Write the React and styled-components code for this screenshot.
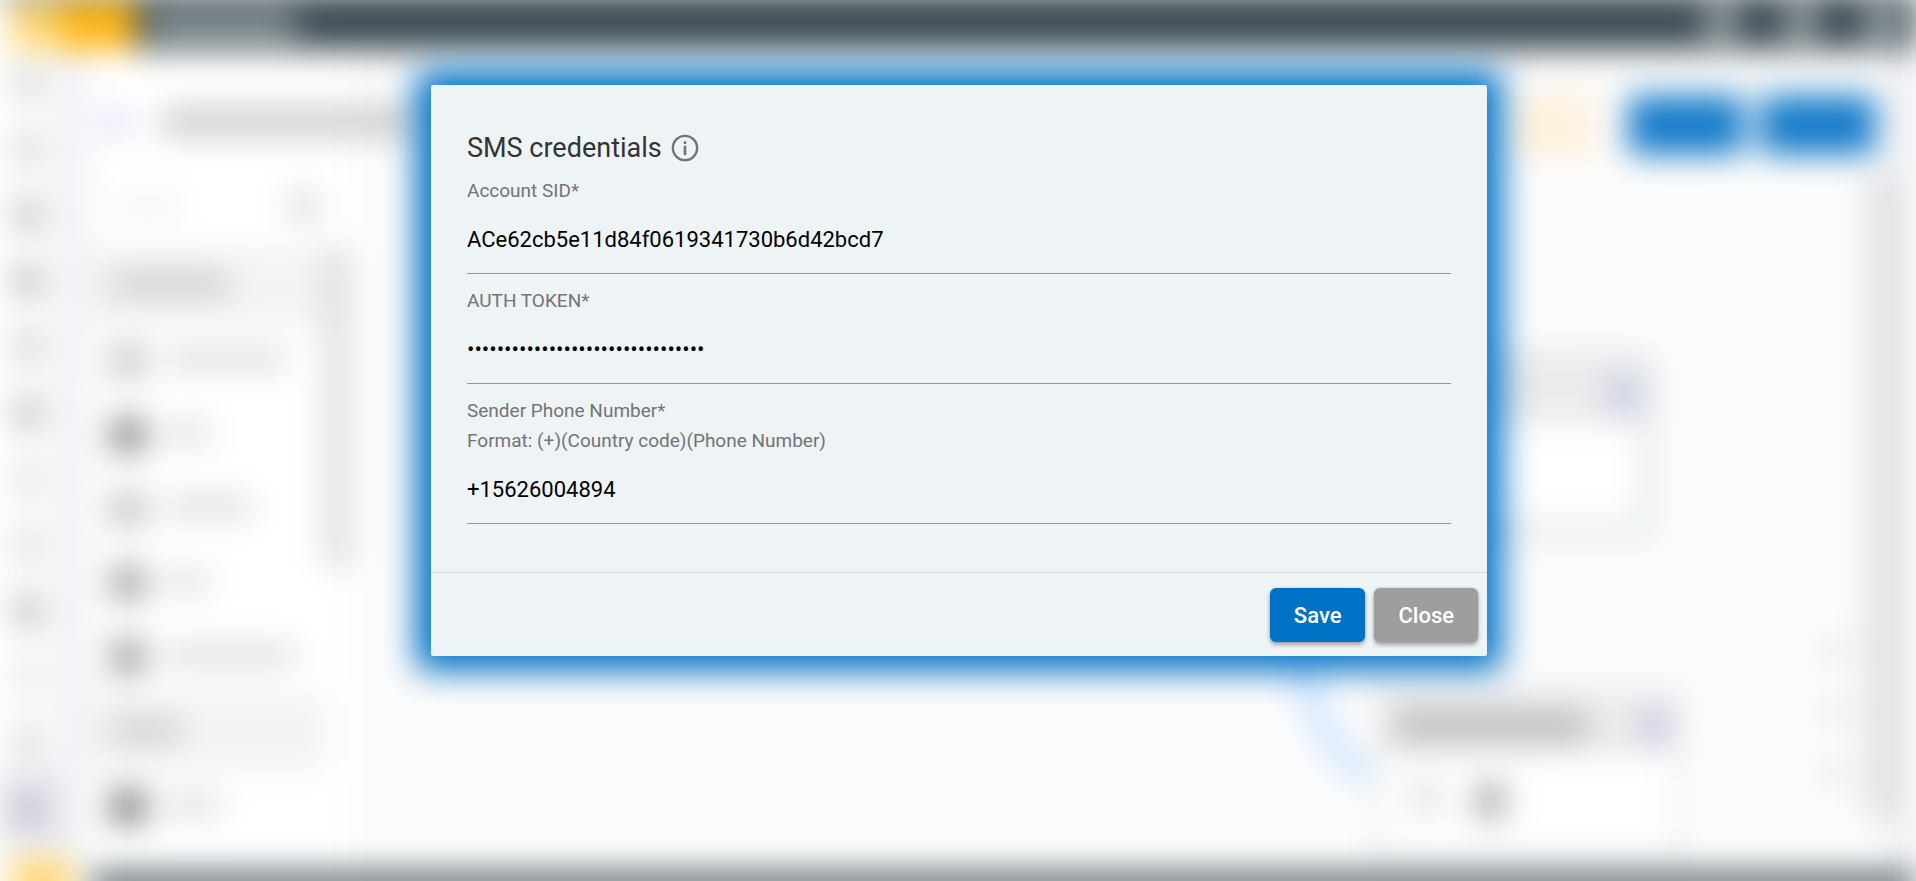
import React, { useState } from 'react'
import styled, { createGlobalStyle } from 'styled-components'


const GlobalStyle = createGlobalStyle`
  * {
    box-sizing: border-box;
  }
  body {
    margin: 0;
    background-color: #fff;
    font-family: Roboto, "Liberation Sans", sans-serif;
  }
`;

const Page = styled.div`
  position: relative;
  height: 100vh;
  overflow: hidden;
`;

/* the builder screen, out of focus while the dialog is open */
const Builder = styled.div`
  height: 100%;
  display: grid;
  grid-template-rows: 50px 1fr 8px;
  filter: blur(16px);
  box-shadow: 0 -8px 0 #3c4b53, 0 14px 0 #3c4b53;
  background-color: #fcfcfc;
`;

const TopBar = styled.header`
  display: flex;
  align-items: flex-start;
  background-color: #3c4b53;
  padding-right: 18px;
  .menu {
    width: 60px;
    height: 50px;
    border-left: 10px solid #fff;
    background-color: #ffd97a;
  }
  .logo {
    width: 76px;
    height: 50px;
    background-color: #ffb813;
  }
  .name {
    width: 146px;
    height: 30px;
    margin: 10px 0 0 14px;
    background-color: #8b959a;
  }
  .actions {
    display: flex;
    gap: 46px;
    margin: 2px 0 0 auto;
  }
`;

const Action = styled.span`
  width: 34px;
  height: 40px;
  border-radius: 50%;
  background-color: #a6afb3;
`;

const Middle = styled.div`
  display: grid;
  grid-template-columns: 56px 32px 260px 1fr;
  min-height: 0;
`;

const SideBar = styled.nav`
  display: flex;
  flex-direction: column;
  align-items: center;
  background-color: #f9fbfb;
`;

const SideItem = styled.span`
  flex: 0 0 66px;
  width: 100%;
  display: flex;
  align-items: center;
  justify-content: center;
  background-color: ${(props) => (props.$active ? '#dcdbe4' : 'transparent')};
  &::after {
    content: '';
    width: 28px;
    height: 28px;
    border-radius: 50%;
    background-color: ${(props) => props.$color};
  }
`;

const Gutter = styled.div`
  background-color: #f0f2f6;
`;

const Palette = styled.aside`
  position: relative;
  z-index: 1;
  display: grid;
  grid-template-columns: 1fr 22px;
  grid-template-rows: 124px 74px 1fr;
  min-height: 0;
  background-color: #fff;
`;

const Heading = styled.div`
  grid-column: 1 / 3;
  display: flex;
  align-items: center;
  gap: 34px;
  padding: 20px 0 0 16px;
  .back {
    flex: 0 0 24px;
    height: 24px;
    background-color: #d9d6f8;
  }
  .name {
    flex: 0 0 260px;
    height: 28px;
    background-color: #cacaca;
  }
`;

const Search = styled.div`
  grid-column: 1 / 3;
  display: flex;
  align-items: center;
  justify-content: space-between;
  padding: 0 32px 10px 30px;
  .hint {
    width: 60px;
    height: 14px;
    background-color: #ebebeb;
  }
  .glass {
    width: 26px;
    height: 26px;
    background-color: #d2d2d2;
  }
`;

const Blocks = styled.div`
  min-height: 0;
  overflow: hidden;
`;

const Section = styled.div`
  height: 76px;
  display: flex;
  align-items: center;
  padding: 0 0 4px 24px;
  background-color: #f3f3f3;
  &::after {
    content: '';
    width: ${(props) => props.$width}px;
    height: 24px;
    background-color: #cccccc;
  }
`;

const Block = styled.div`
  height: 74px;
  display: flex;
  align-items: center;
  gap: 20px;
  padding-left: 22px;
  &::before {
    content: '';
    width: 36px;
    height: 36px;
    border-radius: 8px;
    background-color: ${(props) => props.$color};
  }
  &::after {
    content: '';
    width: ${(props) => props.$width}px;
    height: 20px;
    margin-bottom: 4px;
    background-color: #dadada;
  }
`;

const PaletteScroll = styled.div`
  height: 320px;
  background-color: #dcd8d9;
`;

const Canvas = styled.main`
  position: relative;
  display: grid;
  grid-template-rows: 124px 1fr 54px;
  grid-template-columns: 1fr 24px 24px;
  background-color: #fcfcfc;
  .thumb {
    grid-row: 2;
    grid-column: 2;
    background-color: #dcdcdc;
  }
  .edge {
    grid-row: 1 / 4;
    grid-column: 3;
    background-color: #ecedf2;
  }
`;

const Toolbar = styled.div`
  grid-column: 1 / 3;
  display: flex;
  justify-content: flex-end;
  align-items: center;
  gap: 16px;
  padding: 26px 16px 0 0;
  .test {
    width: 84px;
    height: 60px;
    margin-right: 18px;
    background-color: #fef0db;
  }
  .tool {
    width: 116px;
    height: 60px;
    border-radius: 6px;
    background-color: #187dca;
  }
`;

const Node = styled.div`
  position: absolute;
  right: ${(props) => props.$right}px;
  top: ${(props) => props.$top}px;
  width: ${(props) => props.$width}px;
  height: ${(props) => props.$height}px;
  border: 16px solid ${(props) => props.$border};
  background-color: #fff;
  .head {
    display: flex;
    align-items: center;
    gap: 54px;
    justify-content: flex-end;
    height: 56px;
    padding: 0 4px;
    background-color: #ebebeb;
  }
  .name {
    width: 196px;
    height: 34px;
    background-color: #c0c0c0;
  }
  .edit {
    width: 26px;
    height: 32px;
    background-color: #bfbfe4;
  }
  .foot {
    display: flex;
    gap: 38px;
    padding: 30px 26px;
  }
  .pen {
    width: 24px;
    height: 28px;
    background-color: #d6d6d6;
  }
  .bin {
    width: 28px;
    height: 34px;
    background-color: #a0a0a0;
  }
`;

const Link = styled.svg`
  position: absolute;
  right: 536px;
  top: 590px;
  width: 100px;
  height: 150px;
`;

const Zoomer = styled.div`
  position: absolute;
  right: 70px;
  top: 588px;
  display: flex;
  flex-direction: column;
  gap: 38px;
  span {
    width: 24px;
    height: 24px;
    background-color: #e6e6e6;
  }
`;

const BottomBar = styled.footer`
  display: flex;
  background-color: #3c4b53;
  &::before {
    content: '';
    width: 60px;
    height: 44px;
    margin-top: -14px;
    border: solid #f9fbfb;
    border-width: 0 20px 0 12px;
    background-color: #ffd66e;
  }
`;

const Overlay = styled.div`
  position: absolute;
  inset: 0;
  display: flex;
  justify-content: center;
  align-items: flex-start;
  padding: 85px 16px 0 18px;
`;

const Dialog = styled.form`
  width: 100%;
  max-width: 1056px;
  border-radius: 2px;
  background-color: #eef3f6;
  box-shadow: 0 0 34px 15px #0072c6;
`;

const Content = styled.div`
  padding: 35px 36px 48px;
`;

const Title = styled.h2`
  display: flex;
  align-items: center;
  gap: 7px;
  height: 56px;
  margin: 0;
  color: #333;
  font-size: 27px;
  font-weight: 400;
  line-height: 32px;
  svg {
    width: 32px;
    height: 32px;
    fill: #737373;
  }
`;

const Field = styled.div`
  & + & {
    margin-top: 12px;
  }
  label {
    display: block;
    color: #727476;
    font-size: 19px;
    line-height: 30px;
  }
  input {
    display: block;
    width: 100%;
    height: 68px;
    padding: 0;
    border: none;
    border-bottom: 1px solid #95999b;
    background: transparent;
    color: #000;
    font-family: inherit;
    font-size: 22px;
    &:focus {
      outline: none;
    }
  }
`;

const Actions = styled.div`
  display: flex;
  justify-content: flex-end;
  gap: 9px;
  padding: 15px 9px 14px;
  border-top: 1px solid #d5dadd;
`;

const Button = styled.button`
  height: 54px;
  padding: 0 24px;
  border: none;
  border-radius: 6px;
  background-color: ${(props) => (props.$primary ? '#0072c6' : '#9e9e9e')};
  box-shadow: 0 3px 4px rgba(0, 0, 0, 0.3), 0 0 3px rgba(0, 0, 0, 0.15);
  color: #fff;
  font-family: inherit;
  font-size: 22px;
  font-weight: 500;
  cursor: pointer;
`;

const sideColors = [
  '#d2d2d2', '#d4d4d4', '#b8b8b8', '#adb0af', '#cccccc', '#b4b6b5',
  '#e0e0e0', '#dadada', '#b2b4b3', '#e8e8e8', '#d4d6d5',
];

const InfoIcon = () => (
  <svg viewBox="0 0 24 24" aria-hidden="true">
    <path d="M12 2a10 10 0 1 0 0 20 10 10 0 0 0 0-20zm0 18.2a8.2 8.2 0 1 1 0-16.4 8.2 8.2 0 0 1 0 16.4z" />
    <rect x="11" y="7" width="2" height="2" rx="0.5" />
    <rect x="11" y="10.4" width="2" height="7" rx="0.5" />
  </svg>
)

const Background = () => (
  <Builder aria-hidden="true">
    <TopBar>
      <span className='menu' />
      <span className='logo' />
      <span className='name' />
      <div className='actions'>
        <Action />
        <Action />
        <Action />
      </div>
    </TopBar>
    <Middle>
      <SideBar>
        {sideColors.map((color, i) => <SideItem key={i} $color={color} />)}
        <SideItem $active $color='#c2c0d0' />
      </SideBar>
      <Gutter />
      <Palette>
        <Heading>
          <span className='back' />
          <span className='name' />
        </Heading>
        <Search>
          <span className='hint' />
          <span className='glass' />
        </Search>
        <Blocks>
          <Section $width={116} />
          <Block $color='#c8c8c8' $width={120} />
          <Block $color='#8c8c8c' $width={44} />
          <Block $color='#c4c4c4' $width={86} />
          <Block $color='#a6a6a6' $width={42} />
          <Block $color='#a2a2a2' $width={130} />
          <Section $width={68} />
          <Block $color='#808080' $width={54} />
        </Blocks>
        <PaletteScroll />
      </Palette>
      <Canvas>
        <Toolbar>
          <span className='test' />
          <span className='tool' />
          <span className='tool' />
        </Toolbar>
        <div className='thumb' />
        <div className='edge' />
        <Link viewBox="0 0 100 150">
          <path d="M18 0C30 80 50 110 90 138" fill="none" stroke="#cfe5ff" strokeWidth="24" />
        </Link>
        <Node $right={260} $top={302} $width={300} $height={186} $border='#e3e8ea'>
          <div className='head'>
            <span className='edit' />
          </div>
        </Node>
        <Node $right={228} $top={632} $width={316} $height={182} $border='#f2f3f3'>
          <div className='head'>
            <span className='name' />
            <span className='edit' />
          </div>
          <div className='foot'>
            <span className='pen' />
            <span className='bin' />
          </div>
        </Node>
        <Zoomer>
          <span />
          <span />
          <span />
        </Zoomer>
      </Canvas>
    </Middle>
    <BottomBar />
  </Builder>
)

const App = () => {

  const [formValues, setFormValues] = useState({
    sid: 'ACe62cb5e11d84f0619341730b6d42bcd7',
    token: '0123456789abcdef0123456789abcdef',
    phone: '+15626004894',
  });

  const handleChange = (e) => {
    setFormValues({
      ...formValues,
      [e.target.name]: e.target.value,
    })
  }

  return (
    <Page>
      <GlobalStyle />
      <Background />
      <Overlay>
        <Dialog role='dialog' aria-labelledby='dialog-title' onSubmit={(e) => e.preventDefault()}>
          <Content>
            <Title id='dialog-title'>
              SMS credentials
              <InfoIcon />
            </Title>
            <Field>
              <label htmlFor='sid'>Account SID*</label>
              <input id='sid' name='sid' type='text' value={formValues.sid} onChange={handleChange} />
            </Field>
            <Field>
              <label htmlFor='token'>AUTH TOKEN*</label>
              <input id='token' name='token' type='password' value={formValues.token} onChange={handleChange} />
            </Field>
            <Field>
              <label htmlFor='phone'>
                Sender Phone Number*<br />
                Format: (+)(Country code)(Phone Number)
              </label>
              <input id='phone' name='phone' type='text' value={formValues.phone} onChange={handleChange} />
            </Field>
          </Content>
          <Actions>
            <Button type='submit' $primary>Save</Button>
            <Button type='button'>Close</Button>
          </Actions>
        </Dialog>
      </Overlay>
    </Page>
  )
}

export default App
